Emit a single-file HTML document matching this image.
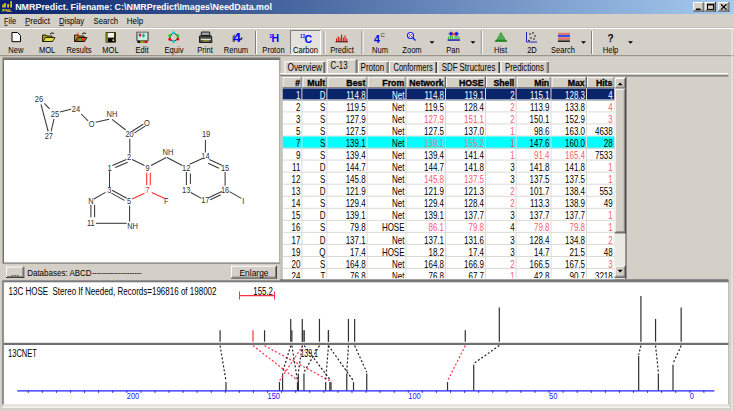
<!DOCTYPE html>
<html><head><meta charset="utf-8"><style>
html,body{margin:0;padding:0;width:734px;height:411px;overflow:hidden;background:#d4d0c8}
svg{display:block;font-family:"Liberation Sans",sans-serif}
</style></head><body>
<svg width="734" height="411" viewBox="0 0 734 411">
<rect x="0.00" y="0.00" width="734.00" height="411.00" fill="#d4d0c8"/>
<defs><linearGradient id="tg" x1="0" x2="1" y1="0" y2="0"><stop offset="0" stop-color="#0a246a"/><stop offset="1" stop-color="#a6caf0"/></linearGradient></defs>
<rect x="0.00" y="0.00" width="734.00" height="14.00" fill="url(#tg)"/>
<rect x="1.50" y="1.00" width="12.00" height="12.00" fill="#0a1a7a"/>
<rect x="2.30" y="4.50" width="1.60" height="3.00" fill="#e8e000"/>
<rect x="4.20" y="3.00" width="1.60" height="4.50" fill="#e8e000"/>
<rect x="7.30" y="4.00" width="1.60" height="3.50" fill="#e8e000"/>
<rect x="10.30" y="1.20" width="1.60" height="6.30" fill="#e8e000"/>
<text x="2" y="11.8" font-size="4.2" font-weight="bold" fill="#e0e000" textLength="10" lengthAdjust="spacingAndGlyphs">PNL</text>
<text x="15.20" y="10.20" font-size="9.8" fill="#fff" font-weight="bold" textLength="256.70" lengthAdjust="spacingAndGlyphs">NMRPredict. Filename: C:\NMRPredict\Images\NeedData.mol</text>
<rect x="693.10" y="2.00" width="11.30" height="9.60" fill="#d4d0c8"/>
<line x1="693.10" y1="2.50" x2="704.40" y2="2.50" stroke="#ffffff" stroke-width="1"/>
<line x1="693.60" y1="2.00" x2="693.60" y2="11.60" stroke="#ffffff" stroke-width="1"/>
<line x1="693.10" y1="11.10" x2="704.40" y2="11.10" stroke="#404040" stroke-width="1"/>
<line x1="703.90" y1="2.00" x2="703.90" y2="11.60" stroke="#404040" stroke-width="1"/>
<line x1="694.10" y1="10.10" x2="703.40" y2="10.10" stroke="#808080" stroke-width="1"/>
<line x1="702.90" y1="3.00" x2="702.90" y2="10.60" stroke="#808080" stroke-width="1"/>
<rect x="704.70" y="2.00" width="11.30" height="9.60" fill="#d4d0c8"/>
<line x1="704.70" y1="2.50" x2="716.00" y2="2.50" stroke="#ffffff" stroke-width="1"/>
<line x1="705.20" y1="2.00" x2="705.20" y2="11.60" stroke="#ffffff" stroke-width="1"/>
<line x1="704.70" y1="11.10" x2="716.00" y2="11.10" stroke="#404040" stroke-width="1"/>
<line x1="715.50" y1="2.00" x2="715.50" y2="11.60" stroke="#404040" stroke-width="1"/>
<line x1="705.70" y1="10.10" x2="715.00" y2="10.10" stroke="#808080" stroke-width="1"/>
<line x1="714.50" y1="3.00" x2="714.50" y2="10.60" stroke="#808080" stroke-width="1"/>
<rect x="718.10" y="2.00" width="11.30" height="9.60" fill="#d4d0c8"/>
<line x1="718.10" y1="2.50" x2="729.40" y2="2.50" stroke="#ffffff" stroke-width="1"/>
<line x1="718.60" y1="2.00" x2="718.60" y2="11.60" stroke="#ffffff" stroke-width="1"/>
<line x1="718.10" y1="11.10" x2="729.40" y2="11.10" stroke="#404040" stroke-width="1"/>
<line x1="728.90" y1="2.00" x2="728.90" y2="11.60" stroke="#404040" stroke-width="1"/>
<line x1="719.10" y1="10.10" x2="728.40" y2="10.10" stroke="#808080" stroke-width="1"/>
<line x1="727.90" y1="3.00" x2="727.90" y2="10.60" stroke="#808080" stroke-width="1"/>
<rect x="696.00" y="8.50" width="4.50" height="1.60" fill="#000"/>
<rect x="707.5" y="4.2" width="6" height="5.2" fill="none" stroke="#000" stroke-width="1"/>
<line x1="707.50" y1="4.80" x2="713.50" y2="4.80" stroke="#000" stroke-width="1.2"/>
<line x1="721.00" y1="4.30" x2="726.50" y2="9.60" stroke="#000" stroke-width="1.3"/>
<line x1="726.50" y1="4.30" x2="721.00" y2="9.60" stroke="#000" stroke-width="1.3"/>
<text x="4.10" y="23.60" font-size="9.3" fill="#000" textLength="11.90" lengthAdjust="spacingAndGlyphs">File</text>
<text x="24.90" y="23.60" font-size="9.3" fill="#000" textLength="25.20" lengthAdjust="spacingAndGlyphs">Predict</text>
<text x="58.90" y="23.60" font-size="9.3" fill="#000" textLength="25.30" lengthAdjust="spacingAndGlyphs">Display</text>
<text x="93.60" y="23.60" font-size="9.3" fill="#000" textLength="24.50" lengthAdjust="spacingAndGlyphs">Search</text>
<text x="126.70" y="23.60" font-size="9.3" fill="#000" textLength="16.40" lengthAdjust="spacingAndGlyphs">Help</text>
<line x1="4.30" y1="25.30" x2="7.60" y2="25.30" stroke="#000" stroke-width="0.8"/>
<line x1="25.10" y1="25.30" x2="29.50" y2="25.30" stroke="#000" stroke-width="0.8"/>
<line x1="59.10" y1="25.30" x2="63.80" y2="25.30" stroke="#000" stroke-width="0.8"/>
<line x1="0.00" y1="27.50" x2="734.00" y2="27.50" stroke="#c4c0b8" stroke-width="1"/>
<line x1="0.00" y1="28.50" x2="734.00" y2="28.50" stroke="#ffffff" stroke-width="1"/>
<line x1="0.00" y1="55.50" x2="734.00" y2="55.50" stroke="#9a968e" stroke-width="1"/>
<line x1="0.00" y1="56.50" x2="734.00" y2="56.50" stroke="#c8c4bc" stroke-width="1"/>
<line x1="255.50" y1="31.00" x2="255.50" y2="54.00" stroke="#808080" stroke-width="1"/>
<line x1="256.50" y1="31.00" x2="256.50" y2="54.00" stroke="#ffffff" stroke-width="1"/>
<line x1="324.10" y1="31.00" x2="324.10" y2="54.00" stroke="#808080" stroke-width="1"/>
<line x1="325.10" y1="31.00" x2="325.10" y2="54.00" stroke="#ffffff" stroke-width="1"/>
<line x1="362.00" y1="31.00" x2="362.00" y2="54.00" stroke="#808080" stroke-width="1"/>
<line x1="363.00" y1="31.00" x2="363.00" y2="54.00" stroke="#ffffff" stroke-width="1"/>
<line x1="481.30" y1="31.00" x2="481.30" y2="54.00" stroke="#808080" stroke-width="1"/>
<line x1="482.30" y1="31.00" x2="482.30" y2="54.00" stroke="#ffffff" stroke-width="1"/>
<line x1="591.50" y1="31.00" x2="591.50" y2="54.00" stroke="#808080" stroke-width="1"/>
<line x1="592.50" y1="31.00" x2="592.50" y2="54.00" stroke="#ffffff" stroke-width="1"/>
<rect x="290" y="30.5" width="31" height="24" fill="#e4e2dc"/>
<line x1="290.00" y1="30.50" x2="321.00" y2="30.50" stroke="#808080" stroke-width="1"/>
<line x1="290.50" y1="30.50" x2="290.50" y2="54.50" stroke="#808080" stroke-width="1"/>
<line x1="290.00" y1="54.50" x2="321.00" y2="54.50" stroke="#ffffff" stroke-width="1"/>
<line x1="320.50" y1="30.50" x2="320.50" y2="54.50" stroke="#ffffff" stroke-width="1"/>
<text x="8.34" y="52.50" font-size="9" fill="#000" textLength="15.12" lengthAdjust="spacingAndGlyphs">New</text>
<text x="38.91" y="52.50" font-size="9" fill="#000" textLength="16.38" lengthAdjust="spacingAndGlyphs">MOL</text>
<text x="66.40" y="52.50" font-size="9" fill="#000" textLength="25.21" lengthAdjust="spacingAndGlyphs">Results</text>
<text x="102.31" y="52.50" font-size="9" fill="#000" textLength="16.38" lengthAdjust="spacingAndGlyphs">MOL</text>
<text x="135.49" y="52.50" font-size="9" fill="#000" textLength="13.03" lengthAdjust="spacingAndGlyphs">Edit</text>
<text x="164.54" y="52.50" font-size="9" fill="#000" textLength="18.91" lengthAdjust="spacingAndGlyphs">Equiv</text>
<text x="197.23" y="52.50" font-size="9" fill="#000" textLength="15.54" lengthAdjust="spacingAndGlyphs">Print</text>
<text x="223.81" y="52.50" font-size="9" fill="#000" textLength="24.37" lengthAdjust="spacingAndGlyphs">Renum</text>
<text x="262.36" y="52.50" font-size="9" fill="#000" textLength="22.27" lengthAdjust="spacingAndGlyphs">Proton</text>
<text x="293.10" y="52.50" font-size="9" fill="#000" textLength="24.80" lengthAdjust="spacingAndGlyphs">Carbon</text>
<text x="330.24" y="52.50" font-size="9" fill="#000" textLength="23.53" lengthAdjust="spacingAndGlyphs">Predict</text>
<text x="372.02" y="52.50" font-size="9" fill="#000" textLength="15.96" lengthAdjust="spacingAndGlyphs">Num</text>
<text x="402.34" y="52.50" font-size="9" fill="#000" textLength="19.32" lengthAdjust="spacingAndGlyphs">Zoom</text>
<text x="446.27" y="52.50" font-size="9" fill="#000" textLength="13.45" lengthAdjust="spacingAndGlyphs">Pan</text>
<text x="493.99" y="52.50" font-size="9" fill="#000" textLength="13.02" lengthAdjust="spacingAndGlyphs">Hist</text>
<text x="527.17" y="52.50" font-size="9" fill="#000" textLength="9.66" lengthAdjust="spacingAndGlyphs">2D</text>
<text x="551.02" y="52.50" font-size="9" fill="#000" textLength="23.95" lengthAdjust="spacingAndGlyphs">Search</text>
<text x="602.73" y="52.50" font-size="9" fill="#000" textLength="15.55" lengthAdjust="spacingAndGlyphs">Help</text>
<path d="M429.5,41.3 L434.5,41.3 L432,43.8 Z" fill="#000"/>
<path d="M470.5,41.3 L475.5,41.3 L473,43.8 Z" fill="#000"/>
<path d="M581.0,41.3 L586.0,41.3 L583.5,43.8 Z" fill="#000"/>
<path d="M628.0,41.3 L633.0,41.3 L630.5,43.8 Z" fill="#000"/>
<path d="M12,32.5 L17.5,32.5 L20.5,35.5 L20.5,41.7 L12,41.7 Z" fill="#fff" stroke="#000" stroke-width="1"/>
<path d="M42.5,35 L46,35 L47,36 L52,36 L52,41.5 L42.5,41.5 Z" fill="#a0a000" stroke="#000" stroke-width="0.8"/>
<path d="M43,41.5 L45.5,37.5 L55,37.5 L52.5,41.5 Z" fill="#e0e040" stroke="#000" stroke-width="0.8"/>
<path d="M50,34 Q52,32 54,33.5" fill="none" stroke="#000" stroke-width="0.9"/>
<path d="M74.5,35 L78,35 L79,36 L84,36 L84,41.5 L74.5,41.5 Z" fill="#a0a000" stroke="#000" stroke-width="0.8"/>
<path d="M75,41.5 L77.5,37.5 L87,37.5 L84.5,41.5 Z" fill="#e04020" stroke="#000" stroke-width="0.8"/>
<rect x="77" y="38.5" width="4" height="2.5" fill="#20c020"/>
<path d="M82,34 Q84,32 86,33.5" fill="none" stroke="#000" stroke-width="0.9"/>
<line x1="78" y1="32.5" x2="78" y2="41" stroke="#ff0000" stroke-width="0.8"/>
<rect x="105.6" y="32.1" width="10.4" height="10.5" fill="#303000"/>
<rect x="106.3" y="33" width="1.6" height="9" fill="#909020"/>
<rect x="108" y="33" width="6" height="4.5" fill="#f4f4f0"/>
<rect x="108" y="38.5" width="6.5" height="3.6" fill="#000"/>
<rect x="112.5" y="39.3" width="1.6" height="1.8" fill="#e0e0e0"/>
<rect x="136.3" y="31.7" width="12.4" height="9.5" fill="#585858"/>
<rect x="137.6" y="32.6" width="9.8" height="7.6" fill="#c8f0e0"/>
<ellipse cx="140" cy="35" rx="1.3" ry="1.7" fill="#d02040"/>
<ellipse cx="143.5" cy="35.5" rx="1.2" ry="2" fill="#20a0a0"/>
<rect x="137.5" y="40.8" width="2.5" height="2.2" fill="#000"/><rect x="140" y="40.8" width="4.5" height="2.2" fill="#909000"/><rect x="144.5" y="40.8" width="3" height="2.2" fill="#c01010"/>
<polygon points="173.5,32.7 177.8,35.8 177.8,38.9 173.5,41.6 169.8,39.3 169.8,35.8" fill="none" stroke="#202020" stroke-width="1"/>
<circle cx="173.5" cy="32.7" r="1.5" fill="#10d0d0"/>
<circle cx="169.8" cy="35.8" r="1.5" fill="#10d010"/>
<circle cx="177.8" cy="35.8" r="1.5" fill="#10d010"/>
<circle cx="169.8" cy="39.3" r="1.5" fill="#e01010"/>
<circle cx="177.8" cy="38.9" r="1.5" fill="#e01010"/>
<circle cx="173.5" cy="41.6" r="1.5" fill="#10d0d0"/>
<path d="M201.5,32 L209.5,32 L210,35.5 L201,35.5 Z" fill="#a0a0a0" stroke="#101010" stroke-width="0.9"/>
<path d="M199.5,36 L211.5,36 L212,42.5 L199.5,42.5 Z" fill="#505050" stroke="#101010" stroke-width="0.9"/>
<rect x="200.8" y="38.8" width="10" height="1.2" fill="#e0e0c0"/><rect x="203" y="40.2" width="6" height="1.2" fill="#a0a020"/>
<path d="M232.5,36 L235,34 L235,42 L232.5,42 Z" fill="#6a7050"/>
<text x="233" y="42.2" font-size="12.5" font-weight="bold" fill="#0000f0" textLength="8" lengthAdjust="spacingAndGlyphs">4</text>
<circle cx="241.5" cy="38.5" r="0.9" fill="#000"/>
<text x="269" y="38" font-size="6" font-weight="bold" fill="#0000ff">1</text><text x="271.5" y="42.3" font-size="10.5" font-weight="bold" fill="#0000ff">H</text>
<text x="300" y="37.5" font-size="5.5" font-weight="bold" fill="#0000ff" textLength="5" lengthAdjust="spacingAndGlyphs">13</text><text x="304.5" y="43" font-size="10.5" font-weight="bold" fill="#0000ff">C</text>
<rect x="336.0" y="38.5" width="1" height="3" fill="#e00000"/>
<rect x="337.7" y="36.5" width="1" height="5" fill="#e00000"/>
<rect x="339.4" y="37.5" width="1" height="4" fill="#e00000"/>
<rect x="341.1" y="34.5" width="1" height="7" fill="#e00000"/>
<rect x="342.8" y="37.5" width="1" height="4" fill="#e00000"/>
<rect x="344.5" y="35.5" width="1" height="6" fill="#e00000"/>
<rect x="346.2" y="38.5" width="1" height="3" fill="#e00000"/>
<rect x="335.5" y="41.3" width="12.5" height="1" fill="#400000"/>
<text x="374" y="43" font-size="10.5" font-weight="bold" fill="#0000e0">4</text><text x="380.5" y="37" font-size="6" fill="#303030">C</text>
<circle cx="410.5" cy="35.5" r="3" fill="#fff" stroke="#2020e0" stroke-width="1.2"/><line x1="412.8" y1="37.8" x2="415.5" y2="40.5" stroke="#2020e0" stroke-width="1.5"/>
<line x1="409" y1="34" x2="412" y2="37" stroke="#e02020" stroke-width="0.8"/><line x1="412" y1="34" x2="409" y2="37" stroke="#e02020" stroke-width="0.8"/>
<rect x="447.6" y="39.4" width="12.4" height="1.3" fill="#0000b0"/>
<path d="M448.5,39 L448.5,36.5 M450.5,39 L450.5,35.5 M452.5,39 L452.5,36.5 M455,39 L455,36.5 M457,39 L457,35.5 M459,39 L459,36.5" stroke="#30b030" stroke-width="1.1"/>
<path d="M448.5,33.8 L451,31.6 L453.2,33.8 L451,36 Z M454.2,33.8 L456.6,31.6 L459,33.8 L456.6,36 Z" fill="#1030f0"/>
<path d="M451.5,32 L456,36.2 M456,32 L451.5,36.2" stroke="#f02020" stroke-width="1"/>
<path d="M495.6,41 L501,31.7 L506.5,41 Z" fill="#40a040"/>
<path d="M499,36 L503,36 M498,38.2 L504,38.2" stroke="#80c080" stroke-width="0.7"/>
<rect x="495" y="40.5" width="12" height="1.2" fill="#007000"/>
<path d="M526.5,32 L526.5,42 L537,42" stroke="#2020c0" stroke-width="1" fill="none"/>
<circle cx="530" cy="34" r="0.8" fill="#000"/>
<circle cx="533" cy="33" r="0.8" fill="#000"/>
<circle cx="535" cy="36" r="0.8" fill="#000"/>
<circle cx="531" cy="38" r="0.8" fill="#000"/>
<circle cx="534" cy="39" r="0.8" fill="#000"/>
<circle cx="529" cy="40.5" r="0.8" fill="#000"/>
<rect x="558.5" y="32.8" width="1" height="2.3" fill="#e02020"/><rect x="558.5" y="37.3" width="1" height="3" fill="#e02020"/>
<rect x="560.5" y="32.8" width="1" height="2.3" fill="#e02020"/><rect x="560.5" y="37.3" width="1" height="3" fill="#e02020"/>
<rect x="562.5" y="32.8" width="1" height="2.3" fill="#e02020"/><rect x="562.5" y="37.3" width="1" height="3" fill="#e02020"/>
<rect x="564.5" y="32.8" width="1" height="2.3" fill="#e02020"/><rect x="564.5" y="37.3" width="1" height="3" fill="#e02020"/>
<rect x="566.5" y="32.8" width="1" height="2.3" fill="#e02020"/><rect x="566.5" y="37.3" width="1" height="3" fill="#e02020"/>
<rect x="568.5" y="32.8" width="1" height="2.3" fill="#e02020"/><rect x="568.5" y="37.3" width="1" height="3" fill="#e02020"/>
<rect x="557.9" y="35.2" width="12" height="1.6" fill="#1030f0"/>
<rect x="557.9" y="40.5" width="12" height="1.4" fill="#101010"/>
<text x="607.5" y="42" font-size="10" font-weight="bold" fill="#000">?</text>
<rect x="2.50" y="57.00" width="278.00" height="207.00" fill="#a09c94"/>
<rect x="2.80" y="58.20" width="277.00" height="205.00" fill="#707070"/>
<rect x="4.00" y="60.00" width="275.50" height="202.50" fill="#ffffff"/>
<line x1="279.50" y1="60.00" x2="279.50" y2="263.00" stroke="#b0aca4" stroke-width="1"/>
<rect x="6.00" y="266.50" width="18.30" height="11.50" fill="#d4d0c8"/>
<line x1="6.00" y1="267.00" x2="24.30" y2="267.00" stroke="#ffffff" stroke-width="1"/>
<line x1="6.50" y1="266.50" x2="6.50" y2="278.00" stroke="#ffffff" stroke-width="1"/>
<line x1="6.00" y1="277.50" x2="24.30" y2="277.50" stroke="#404040" stroke-width="1"/>
<line x1="23.80" y1="266.50" x2="23.80" y2="278.00" stroke="#404040" stroke-width="1"/>
<line x1="7.00" y1="276.50" x2="23.30" y2="276.50" stroke="#808080" stroke-width="1"/>
<line x1="22.80" y1="267.50" x2="22.80" y2="277.00" stroke="#808080" stroke-width="1"/>
<text x="11.00" y="275.50" font-size="9" fill="#000" textLength="8.00" lengthAdjust="spacingAndGlyphs">...</text>
<text x="27.20" y="276.40" font-size="9.5" fill="#000" textLength="64.40" lengthAdjust="spacingAndGlyphs">Databases: ABCD</text>
<text x="92.00" y="276.40" font-size="9.5" fill="#000" textLength="49.50" lengthAdjust="spacingAndGlyphs">---------------------</text>
<rect x="231.00" y="265.70" width="46.00" height="12.90" fill="#d4d0c8"/>
<line x1="231.00" y1="266.20" x2="277.00" y2="266.20" stroke="#ffffff" stroke-width="1"/>
<line x1="231.50" y1="265.70" x2="231.50" y2="278.60" stroke="#ffffff" stroke-width="1"/>
<line x1="231.00" y1="278.10" x2="277.00" y2="278.10" stroke="#404040" stroke-width="1"/>
<line x1="276.50" y1="265.70" x2="276.50" y2="278.60" stroke="#404040" stroke-width="1"/>
<line x1="232.00" y1="277.10" x2="276.00" y2="277.10" stroke="#808080" stroke-width="1"/>
<line x1="275.50" y1="266.70" x2="275.50" y2="277.60" stroke="#808080" stroke-width="1"/>
<text x="239.50" y="275.60" font-size="9.5" fill="#000" textLength="29.00" lengthAdjust="spacingAndGlyphs">Enlarge</text>
<line x1="44.30" y1="103.30" x2="49.60" y2="108.80" stroke="#383838" stroke-width="1.05"/>
<line x1="41.00" y1="104.30" x2="48.20" y2="131.50" stroke="#383838" stroke-width="1.05"/>
<line x1="54.00" y1="118.90" x2="51.10" y2="131.50" stroke="#383838" stroke-width="1.05"/>
<line x1="59.90" y1="112.10" x2="71.00" y2="109.20" stroke="#383838" stroke-width="1.05"/>
<line x1="81.30" y1="114.00" x2="88.10" y2="120.90" stroke="#383838" stroke-width="1.05"/>
<line x1="95.60" y1="122.20" x2="109.20" y2="119.30" stroke="#383838" stroke-width="1.05"/>
<line x1="112.10" y1="119.30" x2="125.70" y2="130.00" stroke="#383838" stroke-width="1.05"/>
<line x1="132.50" y1="131.00" x2="143.20" y2="124.20" stroke="#383838" stroke-width="1.05"/>
<line x1="134.50" y1="132.90" x2="145.20" y2="126.10" stroke="#383838" stroke-width="1.05"/>
<line x1="129.80" y1="138.80" x2="129.80" y2="153.40" stroke="#383838" stroke-width="1.05"/>
<line x1="126.30" y1="159.60" x2="112.40" y2="165.40" stroke="#383838" stroke-width="1.05"/>
<line x1="127.70" y1="162.30" x2="115.20" y2="167.60" stroke="#383838" stroke-width="1.05"/>
<line x1="132.10" y1="159.60" x2="144.50" y2="165.40" stroke="#383838" stroke-width="1.05"/>
<line x1="109.50" y1="171.30" x2="109.50" y2="187.30" stroke="#383838" stroke-width="1.05"/>
<line x1="146.70" y1="172.70" x2="146.70" y2="185.30" stroke="#ff2a2a" stroke-width="1.05"/>
<line x1="150.30" y1="172.70" x2="150.30" y2="185.30" stroke="#ff2a2a" stroke-width="1.05"/>
<line x1="112.10" y1="190.20" x2="126.70" y2="198.20" stroke="#383838" stroke-width="1.05"/>
<line x1="111.40" y1="193.10" x2="124.50" y2="200.40" stroke="#383838" stroke-width="1.05"/>
<line x1="105.50" y1="192.40" x2="93.90" y2="199.00" stroke="#383838" stroke-width="1.05"/>
<line x1="90.90" y1="204.80" x2="90.90" y2="217.20" stroke="#383838" stroke-width="1.05"/>
<line x1="94.60" y1="204.80" x2="94.60" y2="217.20" stroke="#383838" stroke-width="1.05"/>
<line x1="96.00" y1="223.30" x2="126.70" y2="223.30" stroke="#383838" stroke-width="1.05"/>
<line x1="129.60" y1="205.50" x2="129.60" y2="221.60" stroke="#383838" stroke-width="1.05"/>
<line x1="132.10" y1="199.00" x2="144.50" y2="193.20" stroke="#ff2a2a" stroke-width="1.05"/>
<line x1="151.70" y1="192.60" x2="164.80" y2="198.40" stroke="#ff2a2a" stroke-width="1.05"/>
<line x1="151.00" y1="165.50" x2="166.30" y2="157.50" stroke="#383838" stroke-width="1.05"/>
<line x1="167.00" y1="157.50" x2="182.30" y2="165.50" stroke="#383838" stroke-width="1.05"/>
<line x1="186.40" y1="172.10" x2="186.40" y2="185.00" stroke="#383838" stroke-width="1.05"/>
<line x1="190.40" y1="173.50" x2="190.40" y2="184.00" stroke="#383838" stroke-width="1.05"/>
<line x1="189.70" y1="164.30" x2="202.40" y2="158.50" stroke="#383838" stroke-width="1.05"/>
<line x1="205.40" y1="140.00" x2="205.40" y2="152.60" stroke="#383838" stroke-width="1.05"/>
<line x1="209.20" y1="159.50" x2="221.80" y2="165.30" stroke="#383838" stroke-width="1.05"/>
<line x1="208.20" y1="163.30" x2="218.90" y2="168.20" stroke="#383838" stroke-width="1.05"/>
<line x1="225.10" y1="172.10" x2="225.10" y2="185.70" stroke="#383838" stroke-width="1.05"/>
<line x1="221.80" y1="191.60" x2="209.20" y2="197.40" stroke="#383838" stroke-width="1.05"/>
<line x1="220.80" y1="194.80" x2="210.20" y2="199.80" stroke="#383838" stroke-width="1.05"/>
<line x1="201.40" y1="198.40" x2="190.70" y2="192.50" stroke="#383838" stroke-width="1.05"/>
<line x1="229.60" y1="191.60" x2="241.30" y2="198.40" stroke="#383838" stroke-width="1.05"/>
<text x="34.85" y="102.00" font-size="8.3" fill="#303030" textLength="8.31" lengthAdjust="spacingAndGlyphs">26</text>
<text x="50.85" y="117.00" font-size="8.3" fill="#303030" textLength="8.31" lengthAdjust="spacingAndGlyphs">25</text>
<text x="71.85" y="111.80" font-size="8.3" fill="#303030" textLength="8.31" lengthAdjust="spacingAndGlyphs">24</text>
<text x="44.65" y="139.00" font-size="8.3" fill="#303030" textLength="8.31" lengthAdjust="spacingAndGlyphs">27</text>
<text x="88.79" y="126.80" font-size="8.3" fill="#303030" textLength="5.81" lengthAdjust="spacingAndGlyphs">O</text>
<text x="106.61" y="116.50" font-size="8.3" fill="#303030" textLength="10.79" lengthAdjust="spacingAndGlyphs">NH</text>
<text x="144.09" y="126.20" font-size="8.3" fill="#303030" textLength="5.81" lengthAdjust="spacingAndGlyphs">O</text>
<text x="125.45" y="136.90" font-size="8.3" fill="#303030" textLength="8.31" lengthAdjust="spacingAndGlyphs">20</text>
<text x="127.12" y="160.40" font-size="8.3" fill="#303030" textLength="4.15" lengthAdjust="spacingAndGlyphs">2</text>
<text x="107.42" y="171.40" font-size="8.3" fill="#303030" textLength="4.15" lengthAdjust="spacingAndGlyphs">1</text>
<text x="145.52" y="171.00" font-size="8.3" fill="#303030" textLength="4.15" lengthAdjust="spacingAndGlyphs">9</text>
<text x="107.22" y="192.90" font-size="8.3" fill="#303030" textLength="4.15" lengthAdjust="spacingAndGlyphs">3</text>
<text x="145.52" y="193.30" font-size="8.3" fill="#ff2a2a" textLength="4.15" lengthAdjust="spacingAndGlyphs">7</text>
<text x="126.92" y="204.00" font-size="8.3" fill="#303030" textLength="4.15" lengthAdjust="spacingAndGlyphs">5</text>
<text x="88.20" y="204.20" font-size="8.3" fill="#303030" textLength="5.39" lengthAdjust="spacingAndGlyphs">N</text>
<text x="87.02" y="226.10" font-size="8.3" fill="#303030" textLength="7.76" lengthAdjust="spacingAndGlyphs">11</text>
<text x="127.21" y="229.20" font-size="8.3" fill="#303030" textLength="10.79" lengthAdjust="spacingAndGlyphs">NH</text>
<text x="164.02" y="203.70" font-size="8.3" fill="#303030" textLength="4.56" lengthAdjust="spacingAndGlyphs">F</text>
<text x="162.61" y="154.80" font-size="8.3" fill="#303030" textLength="10.79" lengthAdjust="spacingAndGlyphs">NH</text>
<text x="182.05" y="170.90" font-size="8.3" fill="#303030" textLength="8.31" lengthAdjust="spacingAndGlyphs">12</text>
<text x="201.35" y="159.40" font-size="8.3" fill="#303030" textLength="8.31" lengthAdjust="spacingAndGlyphs">14</text>
<text x="201.95" y="136.60" font-size="8.3" fill="#303030" textLength="8.31" lengthAdjust="spacingAndGlyphs">19</text>
<text x="182.05" y="192.50" font-size="8.3" fill="#303030" textLength="8.31" lengthAdjust="spacingAndGlyphs">13</text>
<text x="220.95" y="171.20" font-size="8.3" fill="#303030" textLength="8.31" lengthAdjust="spacingAndGlyphs">15</text>
<text x="220.95" y="192.60" font-size="8.3" fill="#303030" textLength="8.31" lengthAdjust="spacingAndGlyphs">16</text>
<text x="201.15" y="203.30" font-size="8.3" fill="#303030" textLength="8.31" lengthAdjust="spacingAndGlyphs">17</text>
<text x="242.16" y="204.30" font-size="8.3" fill="#303030" textLength="2.08" lengthAdjust="spacingAndGlyphs">I</text>
<line x1="285.00" y1="61.50" x2="285.00" y2="73.00" stroke="#ffffff" stroke-width="1"/>
<line x1="324.70" y1="61.50" x2="324.70" y2="73.00" stroke="#404040" stroke-width="1"/>
<line x1="323.70" y1="62.00" x2="323.70" y2="73.00" stroke="#808080" stroke-width="1"/>
<line x1="284.50" y1="61.50" x2="325.20" y2="61.50" stroke="#ffffff" stroke-width="1"/>
<text x="287.50" y="70.50" font-size="10" fill="#000" textLength="34.50" lengthAdjust="spacingAndGlyphs">Overview</text>
<rect x="326.80" y="59.30" width="30.60" height="14.00" fill="#d4d0c8"/>
<line x1="326.80" y1="59.80" x2="357.40" y2="59.80" stroke="#ffffff" stroke-width="1"/>
<line x1="327.30" y1="59.30" x2="327.30" y2="73.00" stroke="#ffffff" stroke-width="1"/>
<line x1="356.90" y1="59.30" x2="356.90" y2="73.00" stroke="#404040" stroke-width="1"/>
<line x1="355.90" y1="60.00" x2="355.90" y2="73.00" stroke="#808080" stroke-width="1"/>
<text x="330.60" y="69.30" font-size="10" fill="#000" textLength="16.90" lengthAdjust="spacingAndGlyphs">C-13</text>
<line x1="358.50" y1="61.50" x2="358.50" y2="73.00" stroke="#ffffff" stroke-width="1"/>
<line x1="388.00" y1="61.50" x2="388.00" y2="73.00" stroke="#404040" stroke-width="1"/>
<line x1="387.00" y1="62.00" x2="387.00" y2="73.00" stroke="#808080" stroke-width="1"/>
<line x1="358.00" y1="61.50" x2="388.50" y2="61.50" stroke="#ffffff" stroke-width="1"/>
<text x="360.60" y="70.50" font-size="10" fill="#000" textLength="23.60" lengthAdjust="spacingAndGlyphs">Proton</text>
<line x1="389.50" y1="61.50" x2="389.50" y2="73.00" stroke="#ffffff" stroke-width="1"/>
<line x1="436.50" y1="61.50" x2="436.50" y2="73.00" stroke="#404040" stroke-width="1"/>
<line x1="435.50" y1="62.00" x2="435.50" y2="73.00" stroke="#808080" stroke-width="1"/>
<line x1="389.00" y1="61.50" x2="437.00" y2="61.50" stroke="#ffffff" stroke-width="1"/>
<text x="393.50" y="70.50" font-size="10" fill="#000" textLength="39.20" lengthAdjust="spacingAndGlyphs">Conformers</text>
<line x1="438.00" y1="61.50" x2="438.00" y2="73.00" stroke="#ffffff" stroke-width="1"/>
<line x1="499.50" y1="61.50" x2="499.50" y2="73.00" stroke="#404040" stroke-width="1"/>
<line x1="498.50" y1="62.00" x2="498.50" y2="73.00" stroke="#808080" stroke-width="1"/>
<line x1="437.50" y1="61.50" x2="500.00" y2="61.50" stroke="#ffffff" stroke-width="1"/>
<text x="441.80" y="70.50" font-size="10" fill="#000" textLength="53.50" lengthAdjust="spacingAndGlyphs">SDF Structures</text>
<line x1="501.00" y1="61.50" x2="501.00" y2="73.00" stroke="#ffffff" stroke-width="1"/>
<line x1="548.10" y1="61.50" x2="548.10" y2="73.00" stroke="#404040" stroke-width="1"/>
<line x1="547.10" y1="62.00" x2="547.10" y2="73.00" stroke="#808080" stroke-width="1"/>
<line x1="500.50" y1="61.50" x2="548.60" y2="61.50" stroke="#ffffff" stroke-width="1"/>
<text x="505.00" y="70.50" font-size="10" fill="#000" textLength="38.80" lengthAdjust="spacingAndGlyphs">Predictions</text>
<line x1="280.00" y1="73.50" x2="728.00" y2="73.50" stroke="#ffffff" stroke-width="1"/>
<rect x="280.00" y="75.20" width="448.30" height="1.30" fill="#707070"/>
<rect x="279.80" y="76.00" width="2.20" height="204.00" fill="#c8c4bc"/>
<rect x="282.00" y="76.30" width="0.90" height="204.00" fill="#909090"/>
<rect x="280.00" y="279.30" width="448.30" height="2.20" fill="#707070"/>
<rect x="282.50" y="88.20" width="332.20" height="191.00" fill="#fff"/>
<line x1="282.50" y1="77.30" x2="302.40" y2="77.30" stroke="#ffffff" stroke-width="1"/>
<line x1="283.00" y1="76.80" x2="283.00" y2="88.00" stroke="#ffffff" stroke-width="1"/>
<line x1="301.90" y1="76.80" x2="301.90" y2="88.20" stroke="#606060" stroke-width="1"/>
<line x1="282.50" y1="87.70" x2="302.40" y2="87.70" stroke="#707070" stroke-width="1"/>
<line x1="300.90" y1="77.50" x2="300.90" y2="87.20" stroke="#a8a49c" stroke-width="1"/>
<text x="295.24" y="86.10" font-size="9.5" fill="#000" font-weight="bold" textLength="4.86" lengthAdjust="spacingAndGlyphs" stroke="#000" stroke-width="0.35">#</text>
<line x1="302.40" y1="77.30" x2="327.40" y2="77.30" stroke="#ffffff" stroke-width="1"/>
<line x1="302.90" y1="76.80" x2="302.90" y2="88.00" stroke="#ffffff" stroke-width="1"/>
<line x1="326.90" y1="76.80" x2="326.90" y2="88.20" stroke="#606060" stroke-width="1"/>
<line x1="302.40" y1="87.70" x2="327.40" y2="87.70" stroke="#707070" stroke-width="1"/>
<line x1="325.90" y1="77.50" x2="325.90" y2="87.20" stroke="#a8a49c" stroke-width="1"/>
<text x="307.14" y="86.10" font-size="9.5" fill="#000" font-weight="bold" textLength="17.96" lengthAdjust="spacingAndGlyphs" stroke="#000" stroke-width="0.35">Mult</text>
<line x1="327.40" y1="77.30" x2="367.60" y2="77.30" stroke="#ffffff" stroke-width="1"/>
<line x1="327.90" y1="76.80" x2="327.90" y2="88.00" stroke="#ffffff" stroke-width="1"/>
<line x1="367.10" y1="76.80" x2="367.10" y2="88.20" stroke="#606060" stroke-width="1"/>
<line x1="327.40" y1="87.70" x2="367.60" y2="87.70" stroke="#707070" stroke-width="1"/>
<line x1="366.10" y1="77.50" x2="366.10" y2="87.20" stroke="#a8a49c" stroke-width="1"/>
<text x="346.36" y="86.10" font-size="9.5" fill="#000" font-weight="bold" textLength="18.94" lengthAdjust="spacingAndGlyphs" stroke="#000" stroke-width="0.35">Best</text>
<line x1="367.60" y1="77.30" x2="406.50" y2="77.30" stroke="#ffffff" stroke-width="1"/>
<line x1="368.10" y1="76.80" x2="368.10" y2="88.00" stroke="#ffffff" stroke-width="1"/>
<line x1="406.00" y1="76.80" x2="406.00" y2="88.20" stroke="#606060" stroke-width="1"/>
<line x1="367.60" y1="87.70" x2="406.50" y2="87.70" stroke="#707070" stroke-width="1"/>
<line x1="405.00" y1="77.50" x2="405.00" y2="87.20" stroke="#a8a49c" stroke-width="1"/>
<text x="382.35" y="86.10" font-size="9.5" fill="#000" font-weight="bold" textLength="21.85" lengthAdjust="spacingAndGlyphs" stroke="#000" stroke-width="0.35">From</text>
<line x1="406.50" y1="77.30" x2="446.00" y2="77.30" stroke="#ffffff" stroke-width="1"/>
<line x1="407.00" y1="76.80" x2="407.00" y2="88.00" stroke="#ffffff" stroke-width="1"/>
<line x1="445.50" y1="76.80" x2="445.50" y2="88.20" stroke="#606060" stroke-width="1"/>
<line x1="406.50" y1="87.70" x2="446.00" y2="87.70" stroke="#707070" stroke-width="1"/>
<line x1="444.50" y1="77.50" x2="444.50" y2="87.20" stroke="#a8a49c" stroke-width="1"/>
<text x="409.22" y="86.10" font-size="9.5" fill="#000" font-weight="bold" textLength="34.48" lengthAdjust="spacingAndGlyphs" stroke="#000" stroke-width="0.35">Network</text>
<line x1="446.00" y1="77.30" x2="486.00" y2="77.30" stroke="#ffffff" stroke-width="1"/>
<line x1="446.50" y1="76.80" x2="446.50" y2="88.00" stroke="#ffffff" stroke-width="1"/>
<line x1="485.50" y1="76.80" x2="485.50" y2="88.20" stroke="#606060" stroke-width="1"/>
<line x1="446.00" y1="87.70" x2="486.00" y2="87.70" stroke="#707070" stroke-width="1"/>
<line x1="484.50" y1="77.50" x2="484.50" y2="87.20" stroke="#a8a49c" stroke-width="1"/>
<text x="458.93" y="86.10" font-size="9.5" fill="#000" font-weight="bold" textLength="24.77" lengthAdjust="spacingAndGlyphs" stroke="#000" stroke-width="0.35">HOSE</text>
<line x1="486.00" y1="77.30" x2="516.60" y2="77.30" stroke="#ffffff" stroke-width="1"/>
<line x1="486.50" y1="76.80" x2="486.50" y2="88.00" stroke="#ffffff" stroke-width="1"/>
<line x1="516.10" y1="76.80" x2="516.10" y2="88.20" stroke="#606060" stroke-width="1"/>
<line x1="486.00" y1="87.70" x2="516.60" y2="87.70" stroke="#707070" stroke-width="1"/>
<line x1="515.10" y1="77.50" x2="515.10" y2="87.20" stroke="#a8a49c" stroke-width="1"/>
<text x="493.41" y="86.10" font-size="9.5" fill="#000" font-weight="bold" textLength="20.89" lengthAdjust="spacingAndGlyphs" stroke="#000" stroke-width="0.35">Shell</text>
<line x1="516.60" y1="77.30" x2="551.50" y2="77.30" stroke="#ffffff" stroke-width="1"/>
<line x1="517.10" y1="76.80" x2="517.10" y2="88.00" stroke="#ffffff" stroke-width="1"/>
<line x1="551.00" y1="76.80" x2="551.00" y2="88.20" stroke="#606060" stroke-width="1"/>
<line x1="516.60" y1="87.70" x2="551.50" y2="87.70" stroke="#707070" stroke-width="1"/>
<line x1="550.00" y1="77.50" x2="550.00" y2="87.20" stroke="#a8a49c" stroke-width="1"/>
<text x="534.15" y="86.10" font-size="9.5" fill="#000" font-weight="bold" textLength="15.05" lengthAdjust="spacingAndGlyphs" stroke="#000" stroke-width="0.35">Min</text>
<line x1="551.50" y1="77.30" x2="587.00" y2="77.30" stroke="#ffffff" stroke-width="1"/>
<line x1="552.00" y1="76.80" x2="552.00" y2="88.00" stroke="#ffffff" stroke-width="1"/>
<line x1="586.50" y1="76.80" x2="586.50" y2="88.20" stroke="#606060" stroke-width="1"/>
<line x1="551.50" y1="87.70" x2="587.00" y2="87.70" stroke="#707070" stroke-width="1"/>
<line x1="585.50" y1="77.50" x2="585.50" y2="87.20" stroke="#a8a49c" stroke-width="1"/>
<text x="567.70" y="86.10" font-size="9.5" fill="#000" font-weight="bold" textLength="17.00" lengthAdjust="spacingAndGlyphs" stroke="#000" stroke-width="0.35">Max</text>
<line x1="587.00" y1="77.30" x2="614.70" y2="77.30" stroke="#ffffff" stroke-width="1"/>
<line x1="587.50" y1="76.80" x2="587.50" y2="88.00" stroke="#ffffff" stroke-width="1"/>
<line x1="614.20" y1="76.80" x2="614.20" y2="88.20" stroke="#606060" stroke-width="1"/>
<line x1="587.00" y1="87.70" x2="614.70" y2="87.70" stroke="#707070" stroke-width="1"/>
<line x1="613.20" y1="77.50" x2="613.20" y2="87.20" stroke="#a8a49c" stroke-width="1"/>
<text x="595.89" y="86.10" font-size="9.5" fill="#000" font-weight="bold" textLength="16.51" lengthAdjust="spacingAndGlyphs" stroke="#000" stroke-width="0.35">Hits</text>
<clipPath id="gc"><rect x="282.5" y="88.2" width="345" height="190"/></clipPath><g clip-path="url(#gc)">
<rect x="282.50" y="88.30" width="332.20" height="12.05" fill="#0a246a"/>
<line x1="282.50" y1="99.85" x2="614.70" y2="99.85" stroke="#dcdad4" stroke-width="1"/>
<text x="295.96" y="98.90" font-size="10.5" fill="#fff" textLength="4.44" lengthAdjust="spacingAndGlyphs">1</text>
<text x="319.64" y="98.90" font-size="10.5" fill="#fff" textLength="5.76" lengthAdjust="spacingAndGlyphs">D</text>
<text x="346.22" y="98.90" font-size="10.5" fill="#fff" textLength="19.38" lengthAdjust="spacingAndGlyphs">114.8</text>
<text x="392.08" y="98.90" font-size="10.5" fill="#fff" textLength="12.42" lengthAdjust="spacingAndGlyphs">Net</text>
<text x="424.62" y="98.90" font-size="10.5" fill="#fff" textLength="19.38" lengthAdjust="spacingAndGlyphs">114.8</text>
<text x="464.62" y="98.90" font-size="10.5" fill="#fff" textLength="19.38" lengthAdjust="spacingAndGlyphs">119.1</text>
<text x="510.16" y="98.90" font-size="10.5" fill="#fff" textLength="4.44" lengthAdjust="spacingAndGlyphs">2</text>
<text x="530.12" y="98.90" font-size="10.5" fill="#fff" textLength="19.38" lengthAdjust="spacingAndGlyphs">115.1</text>
<text x="565.03" y="98.90" font-size="10.5" fill="#fff" textLength="19.97" lengthAdjust="spacingAndGlyphs">128.3</text>
<text x="608.26" y="98.90" font-size="10.5" fill="#fff" textLength="4.44" lengthAdjust="spacingAndGlyphs">4</text>
<line x1="282.50" y1="111.90" x2="614.70" y2="111.90" stroke="#dcdad4" stroke-width="1"/>
<text x="295.96" y="110.95" font-size="10.5" fill="#000" textLength="4.44" lengthAdjust="spacingAndGlyphs">2</text>
<text x="320.08" y="110.95" font-size="10.5" fill="#000" textLength="5.32" lengthAdjust="spacingAndGlyphs">S</text>
<text x="346.22" y="110.95" font-size="10.5" fill="#000" textLength="19.38" lengthAdjust="spacingAndGlyphs">119.5</text>
<text x="392.08" y="110.95" font-size="10.5" fill="#000" textLength="12.42" lengthAdjust="spacingAndGlyphs">Net</text>
<text x="424.62" y="110.95" font-size="10.5" fill="#000" textLength="19.38" lengthAdjust="spacingAndGlyphs">119.5</text>
<text x="464.03" y="110.95" font-size="10.5" fill="#000" textLength="19.97" lengthAdjust="spacingAndGlyphs">128.4</text>
<text x="510.16" y="110.95" font-size="10.5" fill="#ff5a70" textLength="4.44" lengthAdjust="spacingAndGlyphs">2</text>
<text x="530.12" y="110.95" font-size="10.5" fill="#000" textLength="19.38" lengthAdjust="spacingAndGlyphs">113.9</text>
<text x="565.03" y="110.95" font-size="10.5" fill="#000" textLength="19.97" lengthAdjust="spacingAndGlyphs">133.8</text>
<text x="608.26" y="110.95" font-size="10.5" fill="#ff5a70" textLength="4.44" lengthAdjust="spacingAndGlyphs">4</text>
<line x1="282.50" y1="123.95" x2="614.70" y2="123.95" stroke="#dcdad4" stroke-width="1"/>
<text x="295.96" y="123.00" font-size="10.5" fill="#000" textLength="4.44" lengthAdjust="spacingAndGlyphs">3</text>
<text x="320.08" y="123.00" font-size="10.5" fill="#000" textLength="5.32" lengthAdjust="spacingAndGlyphs">S</text>
<text x="345.63" y="123.00" font-size="10.5" fill="#000" textLength="19.97" lengthAdjust="spacingAndGlyphs">127.9</text>
<text x="392.08" y="123.00" font-size="10.5" fill="#000" textLength="12.42" lengthAdjust="spacingAndGlyphs">Net</text>
<text x="424.03" y="123.00" font-size="10.5" fill="#ff5a70" textLength="19.97" lengthAdjust="spacingAndGlyphs">127.9</text>
<text x="464.03" y="123.00" font-size="10.5" fill="#ff5a70" textLength="19.97" lengthAdjust="spacingAndGlyphs">151.1</text>
<text x="510.16" y="123.00" font-size="10.5" fill="#ff5a70" textLength="4.44" lengthAdjust="spacingAndGlyphs">2</text>
<text x="529.53" y="123.00" font-size="10.5" fill="#000" textLength="19.97" lengthAdjust="spacingAndGlyphs">150.1</text>
<text x="565.03" y="123.00" font-size="10.5" fill="#000" textLength="19.97" lengthAdjust="spacingAndGlyphs">152.9</text>
<text x="608.26" y="123.00" font-size="10.5" fill="#ff5a70" textLength="4.44" lengthAdjust="spacingAndGlyphs">3</text>
<line x1="282.50" y1="136.00" x2="614.70" y2="136.00" stroke="#dcdad4" stroke-width="1"/>
<text x="295.96" y="135.05" font-size="10.5" fill="#000" textLength="4.44" lengthAdjust="spacingAndGlyphs">5</text>
<text x="320.08" y="135.05" font-size="10.5" fill="#000" textLength="5.32" lengthAdjust="spacingAndGlyphs">S</text>
<text x="345.63" y="135.05" font-size="10.5" fill="#000" textLength="19.97" lengthAdjust="spacingAndGlyphs">127.5</text>
<text x="392.08" y="135.05" font-size="10.5" fill="#000" textLength="12.42" lengthAdjust="spacingAndGlyphs">Net</text>
<text x="424.03" y="135.05" font-size="10.5" fill="#000" textLength="19.97" lengthAdjust="spacingAndGlyphs">127.5</text>
<text x="464.03" y="135.05" font-size="10.5" fill="#000" textLength="19.97" lengthAdjust="spacingAndGlyphs">137.0</text>
<text x="510.16" y="135.05" font-size="10.5" fill="#ff5a70" textLength="4.44" lengthAdjust="spacingAndGlyphs">1</text>
<text x="533.97" y="135.05" font-size="10.5" fill="#000" textLength="15.53" lengthAdjust="spacingAndGlyphs">98.6</text>
<text x="565.03" y="135.05" font-size="10.5" fill="#000" textLength="19.97" lengthAdjust="spacingAndGlyphs">163.0</text>
<text x="594.95" y="135.05" font-size="10.5" fill="#000" textLength="17.75" lengthAdjust="spacingAndGlyphs">4638</text>
<rect x="282.50" y="136.50" width="332.20" height="12.05" fill="#00ffff"/>
<line x1="282.50" y1="148.05" x2="614.70" y2="148.05" stroke="#dcdad4" stroke-width="1"/>
<text x="295.96" y="147.10" font-size="10.5" fill="#000" textLength="4.44" lengthAdjust="spacingAndGlyphs">7</text>
<text x="320.08" y="147.10" font-size="10.5" fill="#000" textLength="5.32" lengthAdjust="spacingAndGlyphs">S</text>
<text x="345.63" y="147.10" font-size="10.5" fill="#000" textLength="19.97" lengthAdjust="spacingAndGlyphs">139.1</text>
<text x="392.08" y="147.10" font-size="10.5" fill="#000" textLength="12.42" lengthAdjust="spacingAndGlyphs">Net</text>
<text x="424.03" y="147.10" font-size="10.5" fill="#d08890" textLength="19.97" lengthAdjust="spacingAndGlyphs">139.1</text>
<text x="464.03" y="147.10" font-size="10.5" fill="#d08890" textLength="19.97" lengthAdjust="spacingAndGlyphs">155.2</text>
<text x="510.16" y="147.10" font-size="10.5" fill="#ff4060" textLength="4.44" lengthAdjust="spacingAndGlyphs">1</text>
<text x="529.53" y="147.10" font-size="10.5" fill="#000" textLength="19.97" lengthAdjust="spacingAndGlyphs">147.6</text>
<text x="565.03" y="147.10" font-size="10.5" fill="#000" textLength="19.97" lengthAdjust="spacingAndGlyphs">160.0</text>
<text x="603.82" y="147.10" font-size="10.5" fill="#000" textLength="8.88" lengthAdjust="spacingAndGlyphs">28</text>
<line x1="282.50" y1="160.10" x2="614.70" y2="160.10" stroke="#dcdad4" stroke-width="1"/>
<text x="295.96" y="159.15" font-size="10.5" fill="#000" textLength="4.44" lengthAdjust="spacingAndGlyphs">9</text>
<text x="320.08" y="159.15" font-size="10.5" fill="#000" textLength="5.32" lengthAdjust="spacingAndGlyphs">S</text>
<text x="345.63" y="159.15" font-size="10.5" fill="#000" textLength="19.97" lengthAdjust="spacingAndGlyphs">139.4</text>
<text x="392.08" y="159.15" font-size="10.5" fill="#000" textLength="12.42" lengthAdjust="spacingAndGlyphs">Net</text>
<text x="424.03" y="159.15" font-size="10.5" fill="#000" textLength="19.97" lengthAdjust="spacingAndGlyphs">139.4</text>
<text x="464.03" y="159.15" font-size="10.5" fill="#000" textLength="19.97" lengthAdjust="spacingAndGlyphs">141.4</text>
<text x="510.16" y="159.15" font-size="10.5" fill="#ff5a70" textLength="4.44" lengthAdjust="spacingAndGlyphs">1</text>
<text x="533.97" y="159.15" font-size="10.5" fill="#ff5a70" textLength="15.53" lengthAdjust="spacingAndGlyphs">91.4</text>
<text x="565.03" y="159.15" font-size="10.5" fill="#ff5a70" textLength="19.97" lengthAdjust="spacingAndGlyphs">165.4</text>
<text x="594.95" y="159.15" font-size="10.5" fill="#000" textLength="17.75" lengthAdjust="spacingAndGlyphs">7533</text>
<line x1="282.50" y1="172.15" x2="614.70" y2="172.15" stroke="#dcdad4" stroke-width="1"/>
<text x="292.12" y="171.20" font-size="10.5" fill="#000" textLength="8.28" lengthAdjust="spacingAndGlyphs">11</text>
<text x="319.64" y="171.20" font-size="10.5" fill="#000" textLength="5.76" lengthAdjust="spacingAndGlyphs">D</text>
<text x="345.63" y="171.20" font-size="10.5" fill="#000" textLength="19.97" lengthAdjust="spacingAndGlyphs">144.7</text>
<text x="392.08" y="171.20" font-size="10.5" fill="#000" textLength="12.42" lengthAdjust="spacingAndGlyphs">Net</text>
<text x="424.03" y="171.20" font-size="10.5" fill="#000" textLength="19.97" lengthAdjust="spacingAndGlyphs">144.7</text>
<text x="464.03" y="171.20" font-size="10.5" fill="#000" textLength="19.97" lengthAdjust="spacingAndGlyphs">141.8</text>
<text x="510.16" y="171.20" font-size="10.5" fill="#000" textLength="4.44" lengthAdjust="spacingAndGlyphs">3</text>
<text x="529.53" y="171.20" font-size="10.5" fill="#000" textLength="19.97" lengthAdjust="spacingAndGlyphs">141.8</text>
<text x="565.03" y="171.20" font-size="10.5" fill="#000" textLength="19.97" lengthAdjust="spacingAndGlyphs">141.8</text>
<text x="608.26" y="171.20" font-size="10.5" fill="#ff5a70" textLength="4.44" lengthAdjust="spacingAndGlyphs">1</text>
<line x1="282.50" y1="184.20" x2="614.70" y2="184.20" stroke="#dcdad4" stroke-width="1"/>
<text x="291.52" y="183.25" font-size="10.5" fill="#000" textLength="8.88" lengthAdjust="spacingAndGlyphs">12</text>
<text x="320.08" y="183.25" font-size="10.5" fill="#000" textLength="5.32" lengthAdjust="spacingAndGlyphs">S</text>
<text x="345.63" y="183.25" font-size="10.5" fill="#000" textLength="19.97" lengthAdjust="spacingAndGlyphs">145.8</text>
<text x="392.08" y="183.25" font-size="10.5" fill="#000" textLength="12.42" lengthAdjust="spacingAndGlyphs">Net</text>
<text x="424.03" y="183.25" font-size="10.5" fill="#ff5a70" textLength="19.97" lengthAdjust="spacingAndGlyphs">145.8</text>
<text x="464.03" y="183.25" font-size="10.5" fill="#ff5a70" textLength="19.97" lengthAdjust="spacingAndGlyphs">137.5</text>
<text x="510.16" y="183.25" font-size="10.5" fill="#000" textLength="4.44" lengthAdjust="spacingAndGlyphs">3</text>
<text x="529.53" y="183.25" font-size="10.5" fill="#000" textLength="19.97" lengthAdjust="spacingAndGlyphs">137.5</text>
<text x="565.03" y="183.25" font-size="10.5" fill="#000" textLength="19.97" lengthAdjust="spacingAndGlyphs">137.5</text>
<text x="608.26" y="183.25" font-size="10.5" fill="#ff5a70" textLength="4.44" lengthAdjust="spacingAndGlyphs">1</text>
<line x1="282.50" y1="196.25" x2="614.70" y2="196.25" stroke="#dcdad4" stroke-width="1"/>
<text x="291.52" y="195.30" font-size="10.5" fill="#000" textLength="8.88" lengthAdjust="spacingAndGlyphs">13</text>
<text x="319.64" y="195.30" font-size="10.5" fill="#000" textLength="5.76" lengthAdjust="spacingAndGlyphs">D</text>
<text x="345.63" y="195.30" font-size="10.5" fill="#000" textLength="19.97" lengthAdjust="spacingAndGlyphs">121.9</text>
<text x="392.08" y="195.30" font-size="10.5" fill="#000" textLength="12.42" lengthAdjust="spacingAndGlyphs">Net</text>
<text x="424.03" y="195.30" font-size="10.5" fill="#000" textLength="19.97" lengthAdjust="spacingAndGlyphs">121.9</text>
<text x="464.03" y="195.30" font-size="10.5" fill="#000" textLength="19.97" lengthAdjust="spacingAndGlyphs">121.3</text>
<text x="510.16" y="195.30" font-size="10.5" fill="#ff5a70" textLength="4.44" lengthAdjust="spacingAndGlyphs">2</text>
<text x="529.53" y="195.30" font-size="10.5" fill="#000" textLength="19.97" lengthAdjust="spacingAndGlyphs">101.7</text>
<text x="565.03" y="195.30" font-size="10.5" fill="#000" textLength="19.97" lengthAdjust="spacingAndGlyphs">138.4</text>
<text x="599.39" y="195.30" font-size="10.5" fill="#000" textLength="13.31" lengthAdjust="spacingAndGlyphs">553</text>
<line x1="282.50" y1="208.30" x2="614.70" y2="208.30" stroke="#dcdad4" stroke-width="1"/>
<text x="291.52" y="207.35" font-size="10.5" fill="#000" textLength="8.88" lengthAdjust="spacingAndGlyphs">14</text>
<text x="320.08" y="207.35" font-size="10.5" fill="#000" textLength="5.32" lengthAdjust="spacingAndGlyphs">S</text>
<text x="345.63" y="207.35" font-size="10.5" fill="#000" textLength="19.97" lengthAdjust="spacingAndGlyphs">129.4</text>
<text x="392.08" y="207.35" font-size="10.5" fill="#000" textLength="12.42" lengthAdjust="spacingAndGlyphs">Net</text>
<text x="424.03" y="207.35" font-size="10.5" fill="#000" textLength="19.97" lengthAdjust="spacingAndGlyphs">129.4</text>
<text x="464.03" y="207.35" font-size="10.5" fill="#000" textLength="19.97" lengthAdjust="spacingAndGlyphs">128.4</text>
<text x="510.16" y="207.35" font-size="10.5" fill="#ff5a70" textLength="4.44" lengthAdjust="spacingAndGlyphs">2</text>
<text x="530.12" y="207.35" font-size="10.5" fill="#000" textLength="19.38" lengthAdjust="spacingAndGlyphs">113.3</text>
<text x="565.03" y="207.35" font-size="10.5" fill="#000" textLength="19.97" lengthAdjust="spacingAndGlyphs">138.9</text>
<text x="603.82" y="207.35" font-size="10.5" fill="#000" textLength="8.88" lengthAdjust="spacingAndGlyphs">49</text>
<line x1="282.50" y1="220.35" x2="614.70" y2="220.35" stroke="#dcdad4" stroke-width="1"/>
<text x="291.52" y="219.40" font-size="10.5" fill="#000" textLength="8.88" lengthAdjust="spacingAndGlyphs">15</text>
<text x="319.64" y="219.40" font-size="10.5" fill="#000" textLength="5.76" lengthAdjust="spacingAndGlyphs">D</text>
<text x="345.63" y="219.40" font-size="10.5" fill="#000" textLength="19.97" lengthAdjust="spacingAndGlyphs">139.1</text>
<text x="392.08" y="219.40" font-size="10.5" fill="#000" textLength="12.42" lengthAdjust="spacingAndGlyphs">Net</text>
<text x="424.03" y="219.40" font-size="10.5" fill="#000" textLength="19.97" lengthAdjust="spacingAndGlyphs">139.1</text>
<text x="464.03" y="219.40" font-size="10.5" fill="#000" textLength="19.97" lengthAdjust="spacingAndGlyphs">137.7</text>
<text x="510.16" y="219.40" font-size="10.5" fill="#000" textLength="4.44" lengthAdjust="spacingAndGlyphs">3</text>
<text x="529.53" y="219.40" font-size="10.5" fill="#000" textLength="19.97" lengthAdjust="spacingAndGlyphs">137.7</text>
<text x="565.03" y="219.40" font-size="10.5" fill="#000" textLength="19.97" lengthAdjust="spacingAndGlyphs">137.7</text>
<text x="608.26" y="219.40" font-size="10.5" fill="#ff5a70" textLength="4.44" lengthAdjust="spacingAndGlyphs">1</text>
<line x1="282.50" y1="232.40" x2="614.70" y2="232.40" stroke="#dcdad4" stroke-width="1"/>
<text x="291.52" y="231.45" font-size="10.5" fill="#000" textLength="8.88" lengthAdjust="spacingAndGlyphs">16</text>
<text x="320.08" y="231.45" font-size="10.5" fill="#000" textLength="5.32" lengthAdjust="spacingAndGlyphs">S</text>
<text x="350.07" y="231.45" font-size="10.5" fill="#000" textLength="15.53" lengthAdjust="spacingAndGlyphs">79.8</text>
<text x="381.89" y="231.45" font-size="10.5" fill="#000" textLength="22.61" lengthAdjust="spacingAndGlyphs">HOSE</text>
<text x="428.47" y="231.45" font-size="10.5" fill="#ff5a70" textLength="15.53" lengthAdjust="spacingAndGlyphs">86.1</text>
<text x="468.47" y="231.45" font-size="10.5" fill="#ff5a70" textLength="15.53" lengthAdjust="spacingAndGlyphs">79.8</text>
<text x="510.16" y="231.45" font-size="10.5" fill="#000" textLength="4.44" lengthAdjust="spacingAndGlyphs">4</text>
<text x="533.97" y="231.45" font-size="10.5" fill="#ff5a70" textLength="15.53" lengthAdjust="spacingAndGlyphs">79.8</text>
<text x="569.47" y="231.45" font-size="10.5" fill="#ff5a70" textLength="15.53" lengthAdjust="spacingAndGlyphs">79.8</text>
<text x="608.26" y="231.45" font-size="10.5" fill="#ff5a70" textLength="4.44" lengthAdjust="spacingAndGlyphs">1</text>
<line x1="282.50" y1="244.45" x2="614.70" y2="244.45" stroke="#dcdad4" stroke-width="1"/>
<text x="291.52" y="243.50" font-size="10.5" fill="#000" textLength="8.88" lengthAdjust="spacingAndGlyphs">17</text>
<text x="319.64" y="243.50" font-size="10.5" fill="#000" textLength="5.76" lengthAdjust="spacingAndGlyphs">D</text>
<text x="345.63" y="243.50" font-size="10.5" fill="#000" textLength="19.97" lengthAdjust="spacingAndGlyphs">137.1</text>
<text x="392.08" y="243.50" font-size="10.5" fill="#000" textLength="12.42" lengthAdjust="spacingAndGlyphs">Net</text>
<text x="424.03" y="243.50" font-size="10.5" fill="#000" textLength="19.97" lengthAdjust="spacingAndGlyphs">137.1</text>
<text x="464.03" y="243.50" font-size="10.5" fill="#000" textLength="19.97" lengthAdjust="spacingAndGlyphs">131.6</text>
<text x="510.16" y="243.50" font-size="10.5" fill="#000" textLength="4.44" lengthAdjust="spacingAndGlyphs">3</text>
<text x="529.53" y="243.50" font-size="10.5" fill="#000" textLength="19.97" lengthAdjust="spacingAndGlyphs">128.4</text>
<text x="565.03" y="243.50" font-size="10.5" fill="#000" textLength="19.97" lengthAdjust="spacingAndGlyphs">134.8</text>
<text x="608.26" y="243.50" font-size="10.5" fill="#ff5a70" textLength="4.44" lengthAdjust="spacingAndGlyphs">2</text>
<line x1="282.50" y1="256.50" x2="614.70" y2="256.50" stroke="#dcdad4" stroke-width="1"/>
<text x="291.52" y="255.55" font-size="10.5" fill="#000" textLength="8.88" lengthAdjust="spacingAndGlyphs">19</text>
<text x="319.19" y="255.55" font-size="10.5" fill="#000" textLength="6.21" lengthAdjust="spacingAndGlyphs">Q</text>
<text x="350.07" y="255.55" font-size="10.5" fill="#000" textLength="15.53" lengthAdjust="spacingAndGlyphs">17.4</text>
<text x="381.89" y="255.55" font-size="10.5" fill="#000" textLength="22.61" lengthAdjust="spacingAndGlyphs">HOSE</text>
<text x="428.47" y="255.55" font-size="10.5" fill="#000" textLength="15.53" lengthAdjust="spacingAndGlyphs">18.2</text>
<text x="468.47" y="255.55" font-size="10.5" fill="#000" textLength="15.53" lengthAdjust="spacingAndGlyphs">17.4</text>
<text x="510.16" y="255.55" font-size="10.5" fill="#000" textLength="4.44" lengthAdjust="spacingAndGlyphs">3</text>
<text x="533.97" y="255.55" font-size="10.5" fill="#000" textLength="15.53" lengthAdjust="spacingAndGlyphs">14.7</text>
<text x="569.47" y="255.55" font-size="10.5" fill="#000" textLength="15.53" lengthAdjust="spacingAndGlyphs">21.5</text>
<text x="603.82" y="255.55" font-size="10.5" fill="#000" textLength="8.88" lengthAdjust="spacingAndGlyphs">48</text>
<line x1="282.50" y1="268.55" x2="614.70" y2="268.55" stroke="#dcdad4" stroke-width="1"/>
<text x="291.52" y="267.60" font-size="10.5" fill="#000" textLength="8.88" lengthAdjust="spacingAndGlyphs">20</text>
<text x="320.08" y="267.60" font-size="10.5" fill="#000" textLength="5.32" lengthAdjust="spacingAndGlyphs">S</text>
<text x="345.63" y="267.60" font-size="10.5" fill="#000" textLength="19.97" lengthAdjust="spacingAndGlyphs">164.8</text>
<text x="392.08" y="267.60" font-size="10.5" fill="#000" textLength="12.42" lengthAdjust="spacingAndGlyphs">Net</text>
<text x="424.03" y="267.60" font-size="10.5" fill="#000" textLength="19.97" lengthAdjust="spacingAndGlyphs">164.8</text>
<text x="464.03" y="267.60" font-size="10.5" fill="#000" textLength="19.97" lengthAdjust="spacingAndGlyphs">166.9</text>
<text x="510.16" y="267.60" font-size="10.5" fill="#ff5a70" textLength="4.44" lengthAdjust="spacingAndGlyphs">2</text>
<text x="529.53" y="267.60" font-size="10.5" fill="#000" textLength="19.97" lengthAdjust="spacingAndGlyphs">166.5</text>
<text x="565.03" y="267.60" font-size="10.5" fill="#000" textLength="19.97" lengthAdjust="spacingAndGlyphs">167.5</text>
<text x="608.26" y="267.60" font-size="10.5" fill="#ff5a70" textLength="4.44" lengthAdjust="spacingAndGlyphs">3</text>
<line x1="282.50" y1="280.60" x2="614.70" y2="280.60" stroke="#dcdad4" stroke-width="1"/>
<text x="291.52" y="279.65" font-size="10.5" fill="#000" textLength="8.88" lengthAdjust="spacingAndGlyphs">24</text>
<text x="320.53" y="279.65" font-size="10.5" fill="#000" textLength="4.87" lengthAdjust="spacingAndGlyphs">T</text>
<text x="350.07" y="279.65" font-size="10.5" fill="#000" textLength="15.53" lengthAdjust="spacingAndGlyphs">76.8</text>
<text x="392.08" y="279.65" font-size="10.5" fill="#000" textLength="12.42" lengthAdjust="spacingAndGlyphs">Net</text>
<text x="428.47" y="279.65" font-size="10.5" fill="#000" textLength="15.53" lengthAdjust="spacingAndGlyphs">76.8</text>
<text x="468.47" y="279.65" font-size="10.5" fill="#000" textLength="15.53" lengthAdjust="spacingAndGlyphs">67.7</text>
<text x="510.16" y="279.65" font-size="10.5" fill="#ff5a70" textLength="4.44" lengthAdjust="spacingAndGlyphs">1</text>
<text x="533.97" y="279.65" font-size="10.5" fill="#000" textLength="15.53" lengthAdjust="spacingAndGlyphs">42.8</text>
<text x="569.47" y="279.65" font-size="10.5" fill="#000" textLength="15.53" lengthAdjust="spacingAndGlyphs">90.7</text>
<text x="594.95" y="279.65" font-size="10.5" fill="#000" textLength="17.75" lengthAdjust="spacingAndGlyphs">3218</text>
<line x1="301.90" y1="88.20" x2="301.90" y2="279.00" stroke="#dcdad4" stroke-width="1"/>
<line x1="326.90" y1="88.20" x2="326.90" y2="279.00" stroke="#dcdad4" stroke-width="1"/>
<line x1="367.10" y1="88.20" x2="367.10" y2="279.00" stroke="#dcdad4" stroke-width="1"/>
<line x1="406.00" y1="88.20" x2="406.00" y2="279.00" stroke="#dcdad4" stroke-width="1"/>
<line x1="445.50" y1="88.20" x2="445.50" y2="279.00" stroke="#dcdad4" stroke-width="1"/>
<line x1="485.50" y1="88.20" x2="485.50" y2="279.00" stroke="#dcdad4" stroke-width="1"/>
<line x1="516.10" y1="88.20" x2="516.10" y2="279.00" stroke="#dcdad4" stroke-width="1"/>
<line x1="551.00" y1="88.20" x2="551.00" y2="279.00" stroke="#dcdad4" stroke-width="1"/>
<line x1="586.50" y1="88.20" x2="586.50" y2="279.00" stroke="#dcdad4" stroke-width="1"/>
</g>
<rect x="614.70" y="76.80" width="11.70" height="202.00" fill="#ebe9e4"/>
<rect x="614.70" y="78.00" width="11.10" height="10.70" fill="#d4d0c8"/>
<line x1="614.70" y1="78.50" x2="625.80" y2="78.50" stroke="#ffffff" stroke-width="1"/>
<line x1="615.20" y1="78.00" x2="615.20" y2="88.70" stroke="#ffffff" stroke-width="1"/>
<line x1="614.70" y1="88.20" x2="625.80" y2="88.20" stroke="#404040" stroke-width="1"/>
<line x1="625.30" y1="78.00" x2="625.30" y2="88.70" stroke="#404040" stroke-width="1"/>
<line x1="615.70" y1="87.20" x2="624.80" y2="87.20" stroke="#808080" stroke-width="1"/>
<line x1="624.30" y1="79.00" x2="624.30" y2="87.70" stroke="#808080" stroke-width="1"/>
<path d="M617.7,85.3 L622.7,85.3 L620.2,82.5 Z" fill="#000"/>
<rect x="614.70" y="88.70" width="11.10" height="144.60" fill="#d4d0c8"/>
<line x1="614.70" y1="89.20" x2="625.80" y2="89.20" stroke="#ffffff" stroke-width="1"/>
<line x1="615.20" y1="88.70" x2="615.20" y2="233.30" stroke="#ffffff" stroke-width="1"/>
<line x1="614.70" y1="232.80" x2="625.80" y2="232.80" stroke="#404040" stroke-width="1"/>
<line x1="625.30" y1="88.70" x2="625.30" y2="233.30" stroke="#404040" stroke-width="1"/>
<line x1="615.70" y1="231.80" x2="624.80" y2="231.80" stroke="#808080" stroke-width="1"/>
<line x1="624.30" y1="89.70" x2="624.30" y2="232.30" stroke="#808080" stroke-width="1"/>
<rect x="614.70" y="265.70" width="11.10" height="12.00" fill="#d4d0c8"/>
<line x1="614.70" y1="266.20" x2="625.80" y2="266.20" stroke="#ffffff" stroke-width="1"/>
<line x1="615.20" y1="265.70" x2="615.20" y2="277.70" stroke="#ffffff" stroke-width="1"/>
<line x1="614.70" y1="277.20" x2="625.80" y2="277.20" stroke="#404040" stroke-width="1"/>
<line x1="625.30" y1="265.70" x2="625.30" y2="277.70" stroke="#404040" stroke-width="1"/>
<line x1="615.70" y1="276.20" x2="624.80" y2="276.20" stroke="#808080" stroke-width="1"/>
<line x1="624.30" y1="266.70" x2="624.30" y2="276.70" stroke="#808080" stroke-width="1"/>
<path d="M617.7,269.8 L622.7,269.8 L620.2,272.6 Z" fill="#000"/>
<line x1="626.00" y1="76.80" x2="626.00" y2="279.00" stroke="#404040" stroke-width="1"/>
<line x1="732.00" y1="28.00" x2="732.00" y2="411.00" stroke="#f0eee8" stroke-width="1"/>
<rect x="2.20" y="280.30" width="726.50" height="124.00" fill="#7a7a7a"/>
<rect x="3.80" y="282.30" width="724.60" height="122.30" fill="#ffffff"/>
<rect x="3.00" y="404.60" width="726.00" height="2.60" fill="#e8e6e0"/>
<line x1="2.00" y1="407.50" x2="730.00" y2="407.50" stroke="#f4f2ee" stroke-width="1"/>
<rect x="3.80" y="342.80" width="724.60" height="2.20" fill="#707070"/>
<text x="8.50" y="294.60" font-size="10" fill="#000" textLength="208.00" lengthAdjust="spacingAndGlyphs">13C HOSE  Stereo If Needed, Records=196816 of 198002</text>
<text x="8.00" y="357.00" font-size="10" fill="#000" textLength="29.00" lengthAdjust="spacingAndGlyphs">13CNET</text>
<line x1="239.00" y1="295.60" x2="275.00" y2="295.60" stroke="#ff3040" stroke-width="1.2"/>
<line x1="239.50" y1="291.50" x2="239.50" y2="299.50" stroke="#ff3040" stroke-width="1"/>
<line x1="274.50" y1="291.50" x2="274.50" y2="299.50" stroke="#ff3040" stroke-width="1"/>
<text x="253.30" y="295.10" font-size="10" fill="#000" textLength="19.60" lengthAdjust="spacingAndGlyphs">155.2</text>
<text x="300.40" y="357.20" font-size="10" fill="#000" textLength="17.60" lengthAdjust="spacingAndGlyphs">139.1</text>
<line x1="354.63" y1="341.70" x2="354.63" y2="318.90" stroke="#303030" stroke-width="1.2"/>
<line x1="328.45" y1="341.70" x2="328.45" y2="330.30" stroke="#303030" stroke-width="1.2"/>
<line x1="264.55" y1="341.70" x2="264.55" y2="330.30" stroke="#303030" stroke-width="1.2"/>
<line x1="304.25" y1="341.70" x2="304.25" y2="330.30" stroke="#303030" stroke-width="1.2"/>
<line x1="253.01" y1="341.70" x2="253.01" y2="330.30" stroke="#ff3040" stroke-width="1.2"/>
<line x1="291.86" y1="341.70" x2="291.86" y2="330.30" stroke="#303030" stroke-width="1.2"/>
<line x1="290.73" y1="341.70" x2="290.73" y2="318.90" stroke="#303030" stroke-width="1.2"/>
<line x1="302.84" y1="341.70" x2="302.84" y2="330.30" stroke="#303030" stroke-width="1.2"/>
<line x1="348.44" y1="341.70" x2="348.44" y2="318.90" stroke="#303030" stroke-width="1.2"/>
<line x1="328.45" y1="341.70" x2="328.45" y2="330.30" stroke="#303030" stroke-width="1.2"/>
<line x1="302.27" y1="341.70" x2="302.27" y2="318.90" stroke="#303030" stroke-width="1.2"/>
<line x1="465.26" y1="341.70" x2="465.26" y2="330.30" stroke="#303030" stroke-width="1.2"/>
<line x1="319.45" y1="341.70" x2="319.45" y2="318.90" stroke="#303030" stroke-width="1.2"/>
<line x1="640.92" y1="341.70" x2="640.92" y2="296.10" stroke="#303030" stroke-width="1.2"/>
<line x1="220.08" y1="341.70" x2="220.08" y2="330.30" stroke="#303030" stroke-width="1.2"/>
<line x1="499.32" y1="341.70" x2="499.32" y2="307.50" stroke="#303030" stroke-width="1.2"/>
<line x1="655.56" y1="341.70" x2="655.56" y2="318.90" stroke="#303030" stroke-width="1.2"/>
<line x1="681.17" y1="341.70" x2="681.17" y2="307.50" stroke="#303030" stroke-width="1.2"/>
<line x1="366.74" y1="390.80" x2="366.74" y2="373.40" stroke="#303030" stroke-width="1.2"/>
<line x1="353.51" y1="390.80" x2="353.51" y2="382.10" stroke="#303030" stroke-width="1.2"/>
<line x1="329.86" y1="390.80" x2="329.86" y2="382.10" stroke="#303030" stroke-width="1.2"/>
<line x1="330.99" y1="390.80" x2="330.99" y2="382.10" stroke="#303030" stroke-width="1.2"/>
<line x1="298.33" y1="390.80" x2="298.33" y2="382.10" stroke="#303030" stroke-width="1.2"/>
<line x1="297.49" y1="390.80" x2="297.49" y2="382.10" stroke="#303030" stroke-width="1.2"/>
<line x1="282.57" y1="390.80" x2="282.57" y2="373.40" stroke="#303030" stroke-width="1.2"/>
<line x1="279.47" y1="390.80" x2="279.47" y2="382.10" stroke="#303030" stroke-width="1.2"/>
<line x1="346.75" y1="390.80" x2="346.75" y2="373.40" stroke="#303030" stroke-width="1.2"/>
<line x1="325.64" y1="390.80" x2="325.64" y2="382.10" stroke="#303030" stroke-width="1.2"/>
<line x1="298.33" y1="390.80" x2="298.33" y2="373.40" stroke="#303030" stroke-width="1.2"/>
<line x1="447.53" y1="390.80" x2="447.53" y2="382.10" stroke="#303030" stroke-width="1.2"/>
<line x1="303.96" y1="390.80" x2="303.96" y2="373.40" stroke="#303030" stroke-width="1.2"/>
<line x1="638.67" y1="390.80" x2="638.67" y2="356.00" stroke="#303030" stroke-width="1.2"/>
<line x1="225.99" y1="390.80" x2="225.99" y2="382.10" stroke="#303030" stroke-width="1.2"/>
<line x1="473.71" y1="390.80" x2="473.71" y2="364.70" stroke="#303030" stroke-width="1.2"/>
<line x1="658.37" y1="390.80" x2="658.37" y2="373.40" stroke="#303030" stroke-width="1.2"/>
<line x1="673.01" y1="390.80" x2="673.01" y2="364.70" stroke="#303030" stroke-width="1.2"/>
<line x1="354.63" y1="345.60" x2="366.74" y2="372.20" stroke="#202020" stroke-width="1.2" stroke-dasharray="2,2"/>
<line x1="328.45" y1="345.60" x2="353.51" y2="380.90" stroke="#202020" stroke-width="1.2" stroke-dasharray="2,2"/>
<line x1="264.55" y1="345.60" x2="329.86" y2="380.90" stroke="#ff3040" stroke-width="1.2" stroke-dasharray="2,2"/>
<line x1="304.25" y1="345.60" x2="330.99" y2="380.90" stroke="#202020" stroke-width="1.2" stroke-dasharray="2,2"/>
<line x1="253.01" y1="345.60" x2="298.33" y2="380.90" stroke="#ff3040" stroke-width="1.2" stroke-dasharray="2,2"/>
<line x1="291.86" y1="345.60" x2="297.49" y2="380.90" stroke="#202020" stroke-width="1.2" stroke-dasharray="2,2"/>
<line x1="290.73" y1="345.60" x2="282.57" y2="372.20" stroke="#202020" stroke-width="1.2" stroke-dasharray="2,2"/>
<line x1="302.84" y1="345.60" x2="279.47" y2="380.90" stroke="#ff3040" stroke-width="1.2" stroke-dasharray="2,2"/>
<line x1="348.44" y1="345.60" x2="346.75" y2="372.20" stroke="#202020" stroke-width="1.2" stroke-dasharray="2,2"/>
<line x1="328.45" y1="345.60" x2="325.64" y2="380.90" stroke="#202020" stroke-width="1.2" stroke-dasharray="2,2"/>
<line x1="302.27" y1="345.60" x2="298.33" y2="372.20" stroke="#202020" stroke-width="1.2" stroke-dasharray="2,2"/>
<line x1="465.26" y1="345.60" x2="447.53" y2="380.90" stroke="#ff3040" stroke-width="1.2" stroke-dasharray="2,2"/>
<line x1="319.45" y1="345.60" x2="303.96" y2="372.20" stroke="#202020" stroke-width="1.2" stroke-dasharray="2,2"/>
<line x1="640.92" y1="345.60" x2="638.67" y2="354.80" stroke="#202020" stroke-width="1.2" stroke-dasharray="2,2"/>
<line x1="220.08" y1="345.60" x2="225.99" y2="380.90" stroke="#202020" stroke-width="1.2" stroke-dasharray="2,2"/>
<line x1="499.32" y1="345.60" x2="473.71" y2="363.50" stroke="#202020" stroke-width="1.2" stroke-dasharray="2,2"/>
<line x1="655.56" y1="345.60" x2="658.37" y2="372.20" stroke="#202020" stroke-width="1.2" stroke-dasharray="2,2"/>
<line x1="681.17" y1="345.60" x2="673.01" y2="363.50" stroke="#202020" stroke-width="1.2" stroke-dasharray="2,2"/>
<line x1="17.30" y1="390.80" x2="714.40" y2="390.80" stroke="#2020ff" stroke-width="1.3"/>
<line x1="28.27" y1="390.80" x2="28.27" y2="392.80" stroke="#2020ff" stroke-width="1"/>
<line x1="42.35" y1="390.80" x2="42.35" y2="392.80" stroke="#2020ff" stroke-width="1"/>
<line x1="56.42" y1="390.80" x2="56.42" y2="392.80" stroke="#2020ff" stroke-width="1"/>
<line x1="70.50" y1="390.80" x2="70.50" y2="392.80" stroke="#2020ff" stroke-width="1"/>
<line x1="84.57" y1="390.80" x2="84.57" y2="392.80" stroke="#2020ff" stroke-width="1"/>
<line x1="98.65" y1="390.80" x2="98.65" y2="392.80" stroke="#2020ff" stroke-width="1"/>
<line x1="112.72" y1="390.80" x2="112.72" y2="392.80" stroke="#2020ff" stroke-width="1"/>
<line x1="126.80" y1="390.80" x2="126.80" y2="392.80" stroke="#2020ff" stroke-width="1"/>
<line x1="140.88" y1="390.80" x2="140.88" y2="392.80" stroke="#2020ff" stroke-width="1"/>
<line x1="154.95" y1="390.80" x2="154.95" y2="392.80" stroke="#2020ff" stroke-width="1"/>
<line x1="169.02" y1="390.80" x2="169.02" y2="392.80" stroke="#2020ff" stroke-width="1"/>
<line x1="183.10" y1="390.80" x2="183.10" y2="392.80" stroke="#2020ff" stroke-width="1"/>
<line x1="197.17" y1="390.80" x2="197.17" y2="392.80" stroke="#2020ff" stroke-width="1"/>
<line x1="211.25" y1="390.80" x2="211.25" y2="392.80" stroke="#2020ff" stroke-width="1"/>
<line x1="225.32" y1="390.80" x2="225.32" y2="392.80" stroke="#2020ff" stroke-width="1"/>
<line x1="239.40" y1="390.80" x2="239.40" y2="392.80" stroke="#2020ff" stroke-width="1"/>
<line x1="253.47" y1="390.80" x2="253.47" y2="392.80" stroke="#2020ff" stroke-width="1"/>
<line x1="267.55" y1="390.80" x2="267.55" y2="392.80" stroke="#2020ff" stroke-width="1"/>
<line x1="281.62" y1="390.80" x2="281.62" y2="392.80" stroke="#2020ff" stroke-width="1"/>
<line x1="295.70" y1="390.80" x2="295.70" y2="392.80" stroke="#2020ff" stroke-width="1"/>
<line x1="309.77" y1="390.80" x2="309.77" y2="392.80" stroke="#2020ff" stroke-width="1"/>
<line x1="323.85" y1="390.80" x2="323.85" y2="392.80" stroke="#2020ff" stroke-width="1"/>
<line x1="337.92" y1="390.80" x2="337.92" y2="392.80" stroke="#2020ff" stroke-width="1"/>
<line x1="352.00" y1="390.80" x2="352.00" y2="392.80" stroke="#2020ff" stroke-width="1"/>
<line x1="366.07" y1="390.80" x2="366.07" y2="392.80" stroke="#2020ff" stroke-width="1"/>
<line x1="380.15" y1="390.80" x2="380.15" y2="392.80" stroke="#2020ff" stroke-width="1"/>
<line x1="394.22" y1="390.80" x2="394.22" y2="392.80" stroke="#2020ff" stroke-width="1"/>
<line x1="408.30" y1="390.80" x2="408.30" y2="392.80" stroke="#2020ff" stroke-width="1"/>
<line x1="422.37" y1="390.80" x2="422.37" y2="392.80" stroke="#2020ff" stroke-width="1"/>
<line x1="436.45" y1="390.80" x2="436.45" y2="392.80" stroke="#2020ff" stroke-width="1"/>
<line x1="450.52" y1="390.80" x2="450.52" y2="392.80" stroke="#2020ff" stroke-width="1"/>
<line x1="464.60" y1="390.80" x2="464.60" y2="392.80" stroke="#2020ff" stroke-width="1"/>
<line x1="478.67" y1="390.80" x2="478.67" y2="392.80" stroke="#2020ff" stroke-width="1"/>
<line x1="492.75" y1="390.80" x2="492.75" y2="392.80" stroke="#2020ff" stroke-width="1"/>
<line x1="506.82" y1="390.80" x2="506.82" y2="392.80" stroke="#2020ff" stroke-width="1"/>
<line x1="520.90" y1="390.80" x2="520.90" y2="392.80" stroke="#2020ff" stroke-width="1"/>
<line x1="534.97" y1="390.80" x2="534.97" y2="392.80" stroke="#2020ff" stroke-width="1"/>
<line x1="549.05" y1="390.80" x2="549.05" y2="392.80" stroke="#2020ff" stroke-width="1"/>
<line x1="563.12" y1="390.80" x2="563.12" y2="392.80" stroke="#2020ff" stroke-width="1"/>
<line x1="577.20" y1="390.80" x2="577.20" y2="392.80" stroke="#2020ff" stroke-width="1"/>
<line x1="591.27" y1="390.80" x2="591.27" y2="392.80" stroke="#2020ff" stroke-width="1"/>
<line x1="605.35" y1="390.80" x2="605.35" y2="392.80" stroke="#2020ff" stroke-width="1"/>
<line x1="619.42" y1="390.80" x2="619.42" y2="392.80" stroke="#2020ff" stroke-width="1"/>
<line x1="633.50" y1="390.80" x2="633.50" y2="392.80" stroke="#2020ff" stroke-width="1"/>
<line x1="647.57" y1="390.80" x2="647.57" y2="392.80" stroke="#2020ff" stroke-width="1"/>
<line x1="661.65" y1="390.80" x2="661.65" y2="392.80" stroke="#2020ff" stroke-width="1"/>
<line x1="675.72" y1="390.80" x2="675.72" y2="392.80" stroke="#2020ff" stroke-width="1"/>
<line x1="689.80" y1="390.80" x2="689.80" y2="392.80" stroke="#2020ff" stroke-width="1"/>
<line x1="703.88" y1="390.80" x2="703.88" y2="392.80" stroke="#2020ff" stroke-width="1"/>
<text x="126.80" y="398.80" font-size="8.8" fill="#2020ff" textLength="12.48" lengthAdjust="spacingAndGlyphs">200</text>
<text x="267.55" y="398.80" font-size="8.8" fill="#2020ff" textLength="12.48" lengthAdjust="spacingAndGlyphs">150</text>
<text x="408.30" y="398.80" font-size="8.8" fill="#2020ff" textLength="12.48" lengthAdjust="spacingAndGlyphs">100</text>
<text x="549.05" y="398.80" font-size="8.8" fill="#2020ff" textLength="8.32" lengthAdjust="spacingAndGlyphs">50</text>
<text x="689.80" y="398.80" font-size="8.8" fill="#2020ff" textLength="4.16" lengthAdjust="spacingAndGlyphs">0</text>
</svg></body></html>
